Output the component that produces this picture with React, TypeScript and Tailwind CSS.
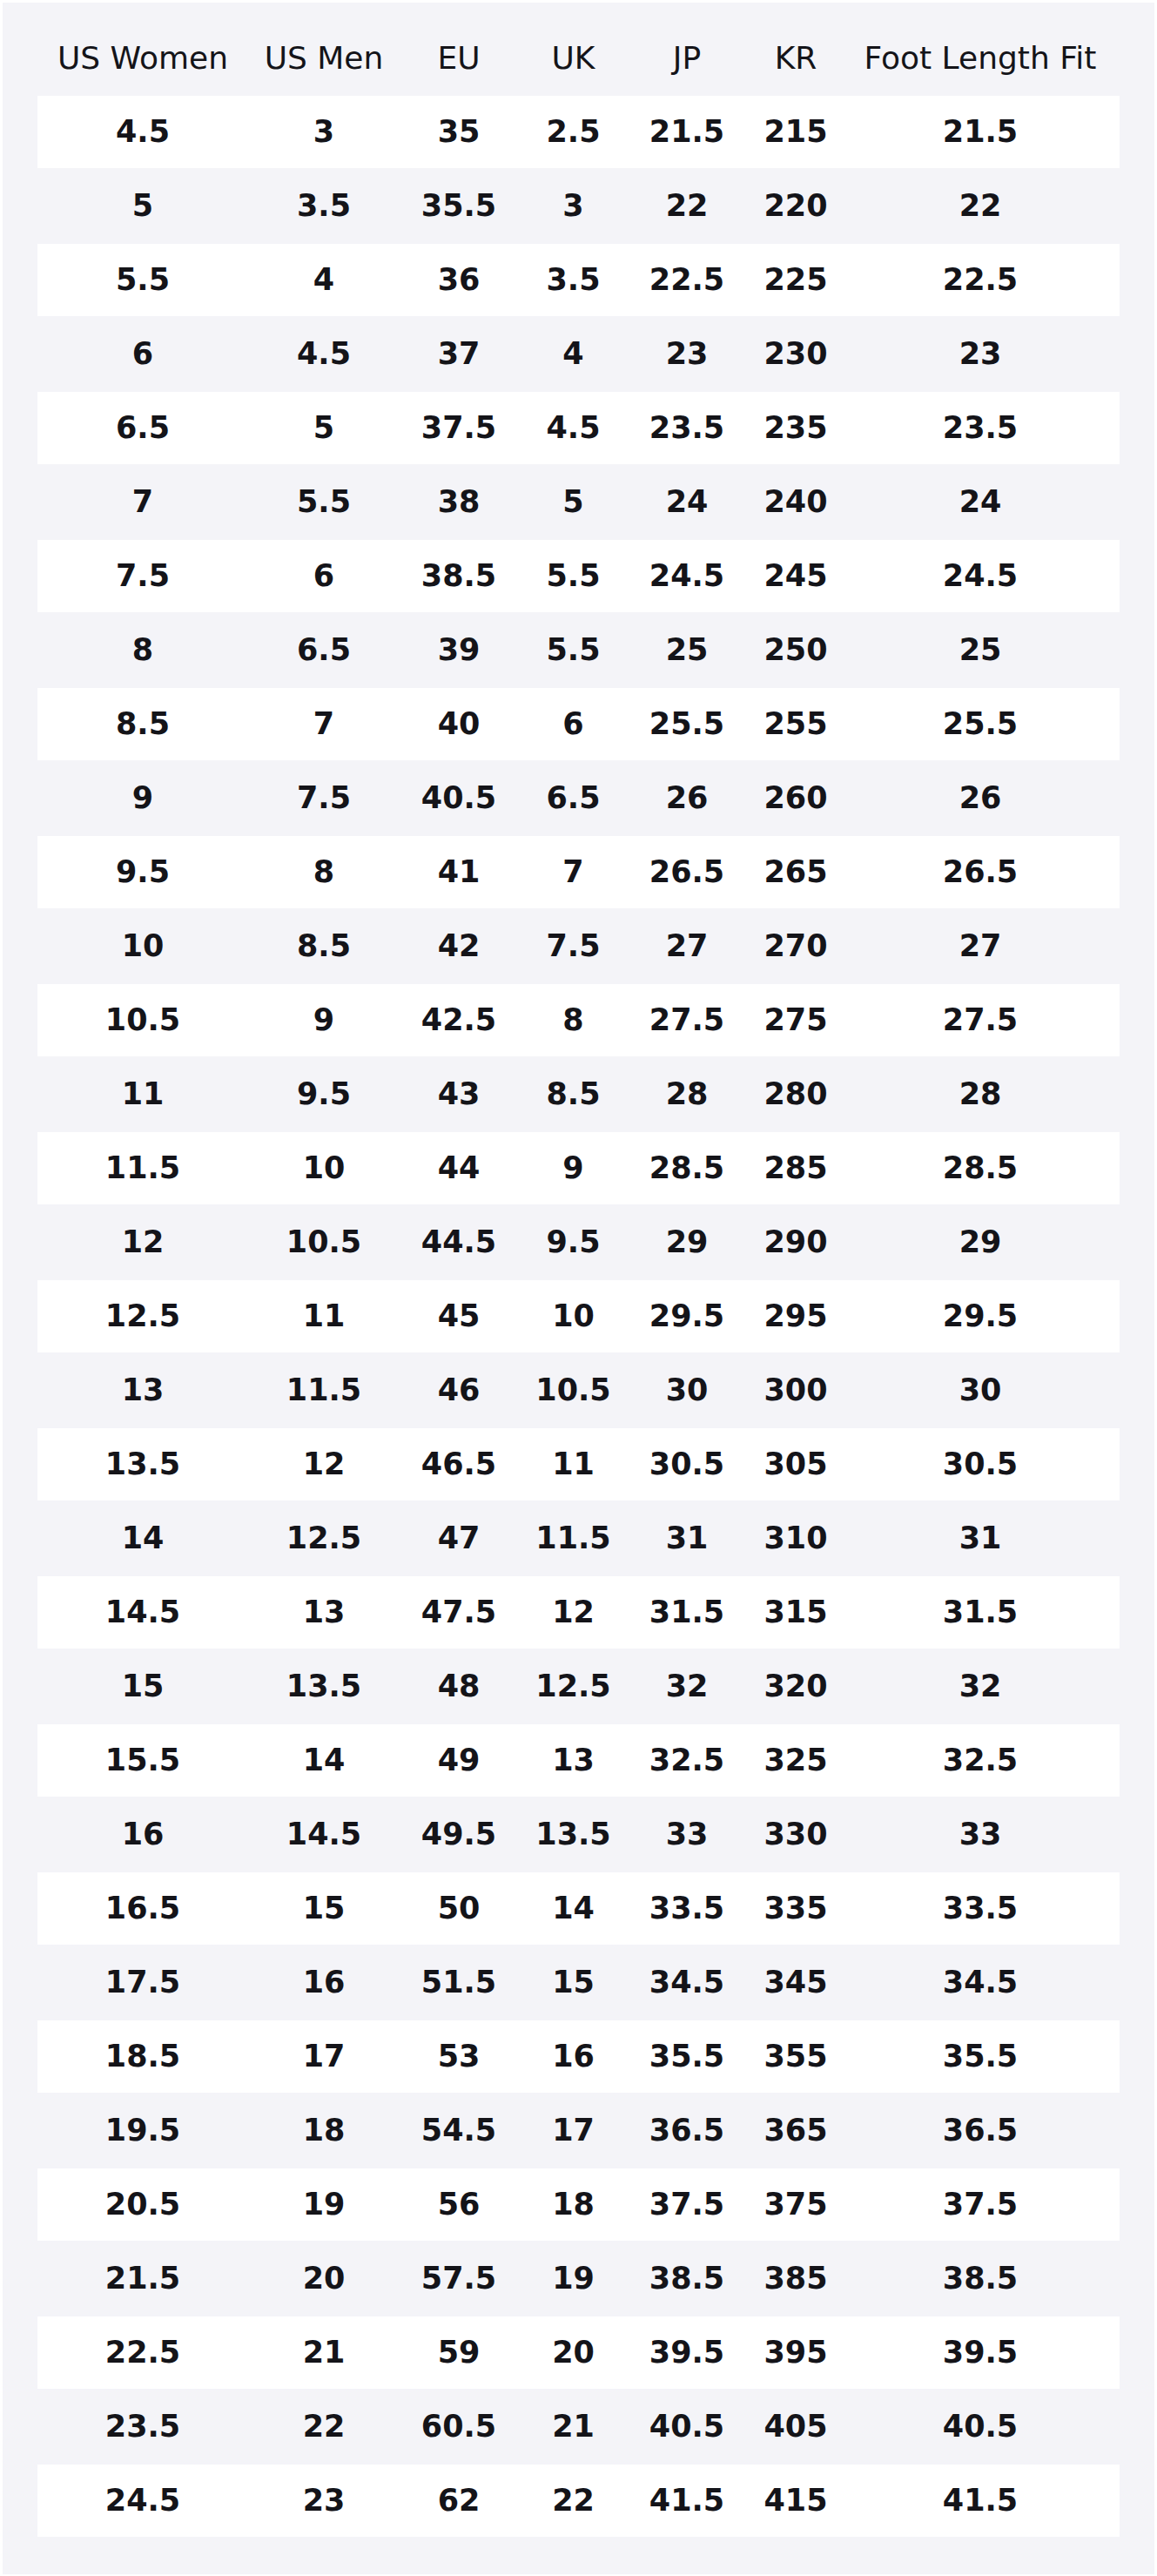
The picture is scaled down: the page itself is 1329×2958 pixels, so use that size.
const headers = ['US Women', 'US Men', 'EU', 'UK', 'JP', 'KR', 'Foot Length Fit']

const rows: string[][] = [
  ['4.5', '3', '35', '2.5', '21.5', '215', '21.5'],
  ['5', '3.5', '35.5', '3', '22', '220', '22'],
  ['5.5', '4', '36', '3.5', '22.5', '225', '22.5'],
  ['6', '4.5', '37', '4', '23', '230', '23'],
  ['6.5', '5', '37.5', '4.5', '23.5', '235', '23.5'],
  ['7', '5.5', '38', '5', '24', '240', '24'],
  ['7.5', '6', '38.5', '5.5', '24.5', '245', '24.5'],
  ['8', '6.5', '39', '5.5', '25', '250', '25'],
  ['8.5', '7', '40', '6', '25.5', '255', '25.5'],
  ['9', '7.5', '40.5', '6.5', '26', '260', '26'],
  ['9.5', '8', '41', '7', '26.5', '265', '26.5'],
  ['10', '8.5', '42', '7.5', '27', '270', '27'],
  ['10.5', '9', '42.5', '8', '27.5', '275', '27.5'],
  ['11', '9.5', '43', '8.5', '28', '280', '28'],
  ['11.5', '10', '44', '9', '28.5', '285', '28.5'],
  ['12', '10.5', '44.5', '9.5', '29', '290', '29'],
  ['12.5', '11', '45', '10', '29.5', '295', '29.5'],
  ['13', '11.5', '46', '10.5', '30', '300', '30'],
  ['13.5', '12', '46.5', '11', '30.5', '305', '30.5'],
  ['14', '12.5', '47', '11.5', '31', '310', '31'],
  ['14.5', '13', '47.5', '12', '31.5', '315', '31.5'],
  ['15', '13.5', '48', '12.5', '32', '320', '32'],
  ['15.5', '14', '49', '13', '32.5', '325', '32.5'],
  ['16', '14.5', '49.5', '13.5', '33', '330', '33'],
  ['16.5', '15', '50', '14', '33.5', '335', '33.5'],
  ['17.5', '16', '51.5', '15', '34.5', '345', '34.5'],
  ['18.5', '17', '53', '16', '35.5', '355', '35.5'],
  ['19.5', '18', '54.5', '17', '36.5', '365', '36.5'],
  ['20.5', '19', '56', '18', '37.5', '375', '37.5'],
  ['21.5', '20', '57.5', '19', '38.5', '385', '38.5'],
  ['22.5', '21', '59', '20', '39.5', '395', '39.5'],
  ['23.5', '22', '60.5', '21', '40.5', '405', '40.5'],
  ['24.5', '23', '62', '22', '41.5', '415', '41.5'],
]

// fixed column tracks so the text centres line up with the chart
const cols = 'grid grid-cols-[242px_174px_136px_127px_134px_116px_1fr]'

export default function App() {
  return (
    <div className="min-h-screen bg-white p-[3px] text-[#141419]" style={{ fontFamily: '"DejaVu Sans", Verdana, sans-serif' }}>
      <div className="bg-[#f4f4f8] px-10 pt-10 pb-[43px]">
        {/* Header */}
        <div className={`${cols} h-[67px] pt-[3px] text-[36px] leading-[41px] font-normal`}>
          {headers.map((h, i) => (
            <div key={h} className={`text-center whitespace-nowrap ${i === 6 ? 'pr-[6px]' : ''}`}>
              {h}
            </div>
          ))}
        </div>

        {/* Rows */}
        {rows.map((row, r) => (
          <div
            key={r}
            className={`${cols} items-center text-[35px] font-bold ${r % 2 === 0 ? 'h-[83px] bg-white' : 'h-[87px]'}`}
          >
            {row.map((cell, i) => (
              <div key={i} className={`text-center ${i === 6 ? 'pr-[6px]' : ''}`}>
                {cell}
              </div>
            ))}
          </div>
        ))}
      </div>
    </div>
  )
}
